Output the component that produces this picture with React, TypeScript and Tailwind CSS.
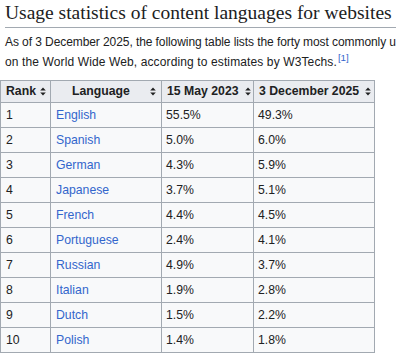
const rows = [
  ["1", "English", "55.5%", "49.3%"],
  ["2", "Spanish", "5.0%", "6.0%"],
  ["3", "German", "4.3%", "5.9%"],
  ["4", "Japanese", "3.7%", "5.1%"],
  ["5", "French", "4.4%", "4.5%"],
  ["6", "Portuguese", "2.4%", "4.1%"],
  ["7", "Russian", "4.9%", "3.7%"],
  ["8", "Italian", "1.9%", "2.8%"],
  ["9", "Dutch", "1.5%", "2.2%"],
  ["10", "Polish", "1.4%", "1.8%"],
];

function SortIcon() {
  return (
    <svg width="6" height="9" viewBox="0 0 6 9" className="shrink-0 text-[#202122]" fill="currentColor">
      <path d="M3 0.5 L5.8 3.6 H0.2 Z" />
      <path d="M3 8.5 L5.8 5.4 H0.2 Z" />
    </svg>
  );
}

function Th({ label, width, gap }: { label: string; width: string; gap: string }) {
  return (
    <th className={`${width} border border-[#a2a9b1] bg-[#eaecf0] px-[5px] py-[2px] font-bold leading-[17px]`}>
      <div className={`flex items-center ${gap}`}>
        <span className="flex-1 text-center whitespace-nowrap">{label}</span>
        <SortIcon />
      </div>
    </th>
  );
}

export default function App() {
  return (
    <div
      className="w-[396px] h-[356px] overflow-hidden bg-white text-[#202122]"
      style={{ fontFamily: '"Liberation Sans", Arial, sans-serif' }}
    >
      <h2
        className="ml-[5px] border-b border-[#a2a9b1] pb-[1px] text-[19.5px] leading-[26px] whitespace-nowrap"
        style={{ fontFamily: '"Liberation Serif", "Times New Roman", serif' }}
      >
        Usage statistics of content languages for websites
      </h2>

      {/* text runs past the right edge on purpose, same as the screenshot */}
      <p className="ml-[5px] mt-[5px] w-[700px] text-[12px] leading-[19.6px]">
        <span className="tracking-[-0.08px]">
          As of 3 December 2025, the following table lists the forty most commonly used content languages
        </span>
        <br />
        <span className="tracking-[0.12px]">on the World Wide Web, according to estimates by W3Techs.</span>
        <sup className="ml-[1px] text-[9.8px] leading-none text-[#3366cc]">[1]</sup>
      </p>

      <table className="mt-[8px] table-fixed border-collapse text-[12.25px] w-[374px]">
        <thead>
          <tr>
            <Th label="Rank" width="w-[50px]" gap="gap-[4px]" />
            <Th label="Language" width="w-[111px]" gap="gap-[4px]" />
            <Th label="15 May 2023" width="w-[92px]" gap="gap-[6px]" />
            <Th label="3 December 2025" width="w-[121px]" gap="gap-[6px]" />
          </tr>
        </thead>
        <tbody>
          {rows.map(([rank, lang, may, dec]) => (
            <tr key={rank}>
              <td className="border border-[#a2a9b1] bg-[#f8f9fa] px-[5px] py-[2px] leading-[20px]">{rank}</td>
              <td className="border border-[#a2a9b1] bg-[#f8f9fa] px-[5px] py-[2px] leading-[20px] text-[#3366cc]">{lang}</td>
              <td className="border border-[#a2a9b1] bg-[#f8f9fa] px-[4px] py-[2px] leading-[20px]">{may}</td>
              <td className="border border-[#a2a9b1] bg-[#f8f9fa] px-[4px] py-[2px] leading-[20px]">{dec}</td>
            </tr>
          ))}
        </tbody>
      </table>
    </div>
  );
}
